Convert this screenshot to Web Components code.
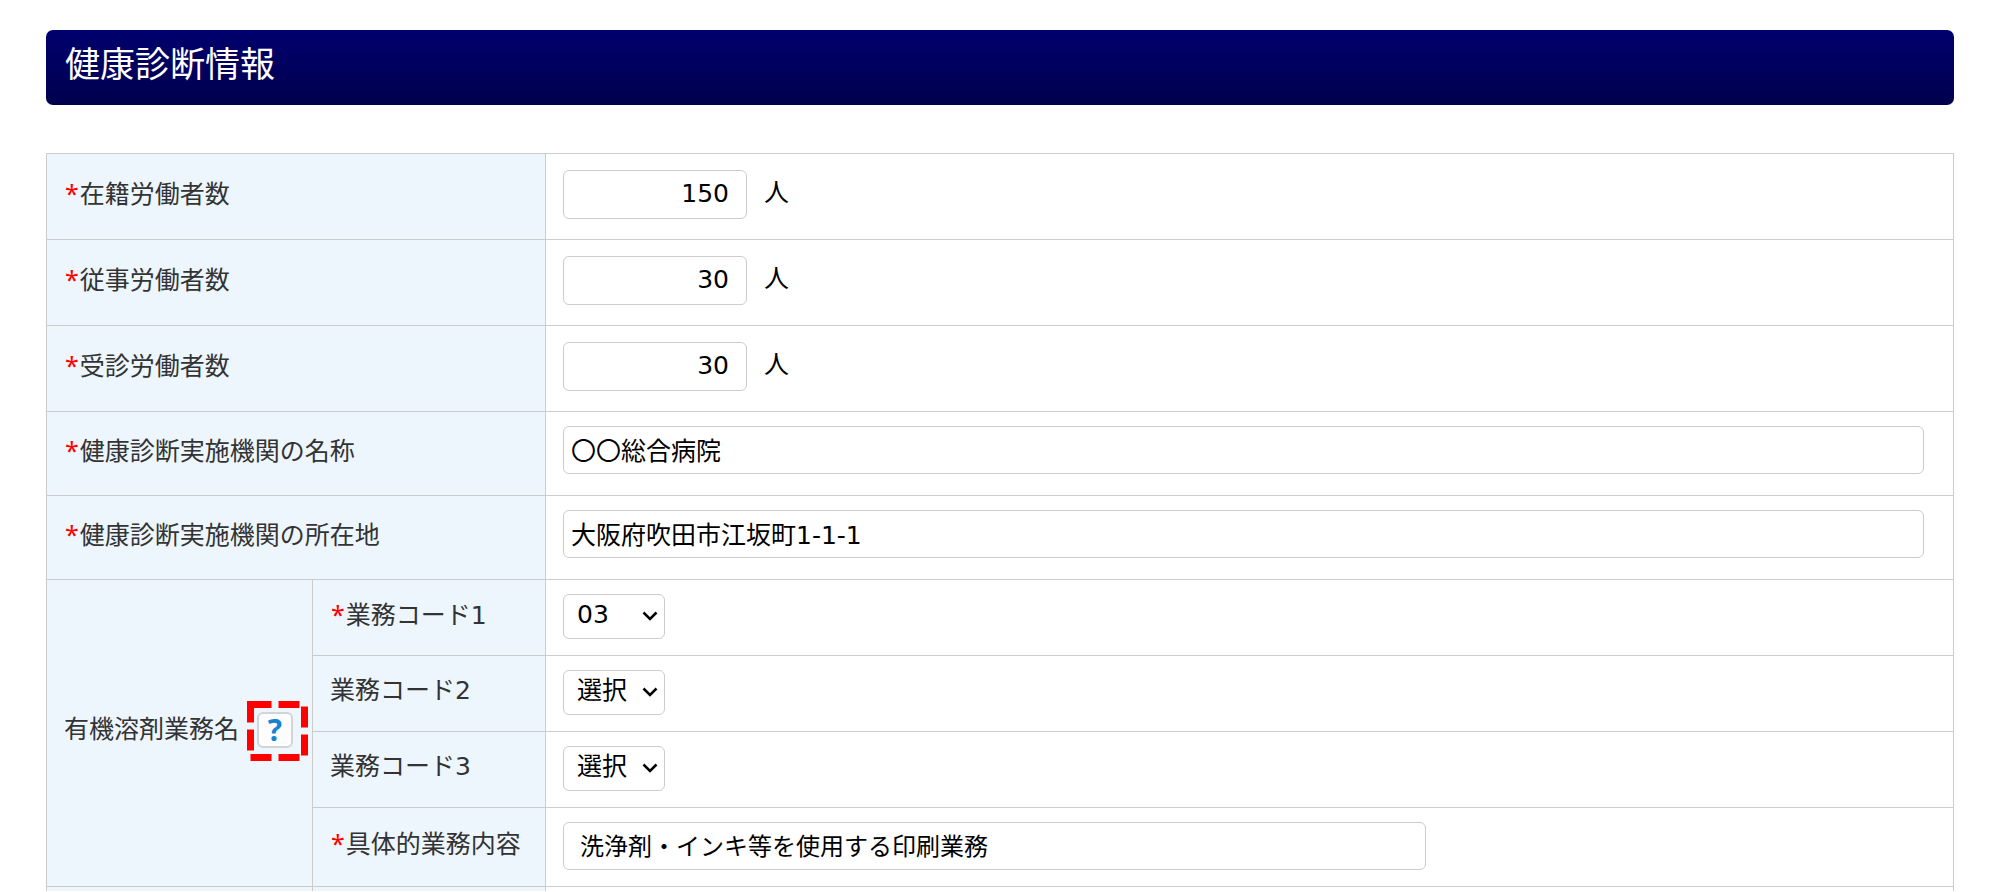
<!DOCTYPE html>
<html lang="ja">
<head>
<meta charset="utf-8">
<title>健康診断情報</title>
<style>
  body {
    margin: 0;
    background: #fff;
    color: #333;
    font: 25px/36px "DejaVu Sans", "Noto Sans CJK JP", sans-serif;
  }
</style>
</head>
<body>
<page-shell>
  <section-header>健康診断情報</section-header>
  <exam-form></exam-form>
</page-shell>

<template id="page-shell">
  <style>
    :host { display: flex; flex-direction: column; gap: 48px; padding: 30px 46px 0; }
  </style>
  <slot></slot>
</template>

<template id="section-header">
  <style>
    :host { display: block; }
    h2 {
      margin: 0;
      padding: 11px 19px 16px;
      border-radius: 7px;
      background: linear-gradient(#00006e, #00004e);
      color: #fff;
      font-size: 35px;
      line-height: 48px;
      font-weight: 400;
    }
  </style>
  <h2><slot></slot></h2>
</template>

<template id="required-mark">
  <style>
    :host { display: inline; margin: 0 1px; color: #f00; font-family: "Noto Sans", sans-serif; }
  </style>*</template>

<template id="help-button">
  <style>
    :host { display: inline-flex; position: relative; }
    button {
      width: 36px; height: 36px; padding: 0;
      border: 2px solid #d2d5d8; border-radius: 6px; background: #fdfdfd;
      color: #1583d0; font: 700 30px/32px "Open Sans", sans-serif;
    }
    svg { position: absolute; left: -10px; top: -11px; pointer-events: none; }
  </style>
  <button type="button" aria-label="業務名の説明">?</button>
  <svg width="61" height="60" fill="none" stroke="#f00" stroke-width="7" stroke-dasharray="21 7" aria-hidden="true">
    <path d="M3.500 3.500H57.500V56.500H3.500Z"/>
  </svg>
</template>

<template id="exam-form">
  <style>
    :host { display: block; }
    table { width: 100%; border-collapse: collapse; table-layout: fixed; }
    .group { width: 266px; }
    .item { width: 233px; }
    th, td { box-sizing: border-box; border: 1px solid #ccc; padding: 0 17px; text-align: left; }
    th { background: #edf5fd; font-weight: 400; padding-bottom: 6px; white-space: nowrap; }
    td { vertical-align: top; padding-top: 14px; color: #000; }
    .count { height: 86px; }
    .count td { padding-top: 16px; }
    .wide { height: 84px; }
    .code { height: 76px; }
    .detail { height: 79px; }
    .next { height: 4px; }
    .next th, .next td { padding: 0; border-bottom: 0; }
    .field { display: flex; align-items: center; gap: 17px; }
    .name { display: flex; align-items: center; gap: 18px; }
    input, select {
      box-sizing: border-box; margin: 0; border: 1px solid #ccc; border-radius: 6px;
      background: #fff; color: #000; font: inherit; height: 48px;
    }
    .count input { width: 184px; height: 49px; padding: 0 17px 3px; text-align: right; }
    .unit { padding-bottom: 4px; }
    .wide input { display: block; width: calc(100% - 12px); padding: 0 7px 3px; }
    .detail input { display: block; width: 863px; max-width: 100%; padding: 0 16px 3px; font-size: 24px; }
    .select { display: inline-grid; align-items: center; vertical-align: top; }
    .select > * { grid-area: 1 / 1; }
    select { appearance: none; width: 102px; height: 45px; padding: 0 13px 3px; }
    .select svg { justify-self: end; margin: 0 7px 2px 0; pointer-events: none; }
  </style>
  <table>
    <colgroup><col class="group"><col class="item"><col></colgroup>
    <tbody>
      <tr class="count">
        <th colspan="2" scope="row"><label for="enrolled"><required-mark></required-mark>在籍労働者数</label></th>
        <td><div class="field"><input id="enrolled" type="text" inputmode="numeric" value="150"><span class="unit">人</span></div></td>
      </tr>
      <tr class="count">
        <th colspan="2" scope="row"><label for="engaged"><required-mark></required-mark>従事労働者数</label></th>
        <td><div class="field"><input id="engaged" type="text" inputmode="numeric" value="30"><span class="unit">人</span></div></td>
      </tr>
      <tr class="count">
        <th colspan="2" scope="row"><label for="examined"><required-mark></required-mark>受診労働者数</label></th>
        <td><div class="field"><input id="examined" type="text" inputmode="numeric" value="30"><span class="unit">人</span></div></td>
      </tr>
      <tr class="wide">
        <th colspan="2" scope="row"><label for="clinic"><required-mark></required-mark>健康診断実施機関の名称</label></th>
        <td><input id="clinic" type="text" value="〇〇総合病院"></td>
      </tr>
      <tr class="wide">
        <th colspan="2" scope="row"><label for="address"><required-mark></required-mark>健康診断実施機関の所在地</label></th>
        <td><input id="address" type="text" value="大阪府吹田市江坂町1-1-1"></td>
      </tr>
      <tr class="code">
        <th rowspan="4" scope="rowgroup"><div class="name">有機溶剤業務名<help-button></help-button></div></th>
        <th scope="row"><label for="code1"><required-mark></required-mark>業務コード1</label></th>
        <td><span class="select"><select id="code1"><option>03</option></select><svg width="16" height="10" fill="none" stroke="#000" stroke-width="2.500"><path d="M1.500 1.500 8 8 14.500 1.500"/></svg></span></td>
      </tr>
      <tr class="code">
        <th scope="row"><label for="code2">業務コード2</label></th>
        <td><span class="select"><select id="code2"><option>選択</option></select><svg width="16" height="10" fill="none" stroke="#000" stroke-width="2.500"><path d="M1.500 1.500 8 8 14.500 1.500"/></svg></span></td>
      </tr>
      <tr class="code">
        <th scope="row"><label for="code3">業務コード3</label></th>
        <td><span class="select"><select id="code3"><option>選択</option></select><svg width="16" height="10" fill="none" stroke="#000" stroke-width="2.500"><path d="M1.500 1.500 8 8 14.500 1.500"/></svg></span></td>
      </tr>
      <tr class="detail">
        <th scope="row"><label for="detail"><required-mark></required-mark>具体的業務内容</label></th>
        <td><input id="detail" type="text" value="洗浄剤・インキ等を使用する印刷業務"></td>
      </tr>
      <tr class="next"><th></th><th></th><td></td></tr>
    </tbody>
  </table>
</template>

<script>
  class TemplateElement extends HTMLElement {
    constructor() {
      super();
      const template = document.getElementById(this.localName);
      this.attachShadow({ mode: "open" }).append(template.content.cloneNode(true));
    }
  }
  for (const name of ["page-shell", "section-header", "required-mark", "help-button", "exam-form"]) {
    customElements.define(name, class extends TemplateElement {});
  }
</script>
</body>
</html>
